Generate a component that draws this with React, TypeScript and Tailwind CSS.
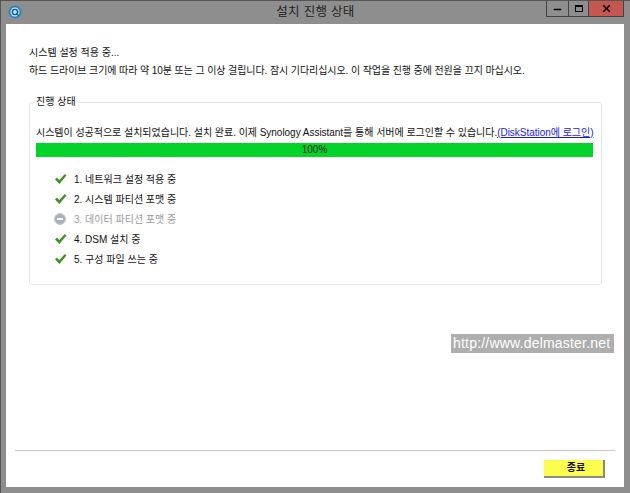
import { Minus, X } from 'lucide-react'

const kr = '"Liberation Sans", "Noto Sans CJK KR", sans-serif'

const steps = [
  { label: '1. 네트워크 설정 적용 중', done: true },
  { label: '2. 시스템 파티션 포맷 중', done: true },
  { label: '3. 데이터 파티션 포맷 중', done: false },
  { label: '4. DSM 설치 중', done: true },
  { label: '5. 구성 파일 쓰는 중', done: true },
]

function AppIcon() {
  return (
    <svg width="14" height="14" viewBox="0 0 14 14">
      <circle cx="7" cy="7" r="6.5" fill="#2f86b8" />
      <circle cx="7" cy="7" r="4.5" fill="#bfe3f2" />
      <circle cx="7" cy="7" r="2.6" fill="none" stroke="#0f5d8c" strokeWidth="1.4" />
      <path d="M8 9l2.5 1.5" stroke="#0f5d8c" strokeWidth="1.4" />
    </svg>
  )
}

function StepIcon({ done }: { done: boolean }) {
  if (done) {
    return (
      <svg width="13" height="12" viewBox="0 0 13 12">
        <path d="M1 6.5l2-2 2.3 2.4L10.8 1 12.5 2.6 5.4 11z" fill="#43922b" />
      </svg>
    )
  }
  return (
    <div className="w-[12px] h-[12px] rounded-full bg-[#a9b2bb] border border-[#c4cad0] flex items-center justify-center">
      <div className="w-[6px] h-[2px] bg-white" />
    </div>
  )
}

export default function App() {
  return (
    <div
      className="relative w-[630px] h-[493px] overflow-hidden bg-[#8e8e8e] border-t border-l border-[#555] flex flex-col"
      style={{ fontFamily: kr }}
    >
      <header className="h-[23px] flex shrink-0 relative">
        <div className="absolute left-[7px] top-[4px]">
          <AppIcon />
        </div>
        <div className="flex-1 text-center text-[12.5px] leading-[23px] text-[#222] tracking-[0.3px]">설치 진행 상태</div>
        <div className="absolute right-[6px] top-0 h-[16px] flex border-b border-l border-r border-[#444]">
          <div className="w-[22px] flex items-center justify-center border-r border-[#444]">
            <Minus size={11} strokeWidth={3} className="text-black mt-[2px]" />
          </div>
          <div className="w-[20px] flex items-center justify-center border-r border-[#444]">
            <div className="w-[8px] h-[7px] border border-t-2 border-black" />
          </div>
          <div className="w-[34px] bg-[#c4574f] flex items-center justify-center">
            <X size={11} strokeWidth={3.5} className="text-black" />
          </div>
        </div>
      </header>

      <main className="w-[618px] ml-[5px] h-[463px] bg-white flex flex-col text-[10px] text-[#111]">
        <div className="pl-[23px] pt-[20px]">
          <p className="leading-[18px] h-[18px]">시스템 설정 적용 중...</p>
          <p className="leading-[18px] h-[17px] tracking-[-0.09px]">
            하드 드라이브 크기에 따라 약 10분 또는 그 이상 걸립니다. 잠시 기다리십시오. 이 작업을 진행 중에 전원을 끄지 마십시오.
          </p>
        </div>

        <section className="relative ml-[23px] mt-[23px] w-[573px] h-[183px] border border-[#e2e6e8] rounded-[3px] px-[6px] pt-[22px]">
          <div className="absolute left-[4px] top-[-8px] bg-white px-[2px] leading-[14px]">진행 상태</div>
          <p className="h-[18px] leading-[16px] whitespace-nowrap tracking-[-0.03px]">
            시스템이 성공적으로 설치되었습니다. 설치 완료. 이제 Synology Assistant를 통해 서버에 로그인할 수 있습니다.
            <a href="#" className="text-[#1a1ae0] underline">(DiskStation에 로그인)</a>
          </p>
          <div className="h-[14px] w-[557px] bg-[#04d32a] text-center leading-[14px] text-[#222]">100%</div>
          <ul className="mt-[12px] pl-[18px] flex flex-col">
            {steps.map((s) => (
              <li key={s.label} className="h-[20px] flex items-center">
                <div className="w-[20px] flex justify-start">
                  <StepIcon done={s.done} />
                </div>
                <span className={s.done ? 'text-[#111]' : 'text-[#9a9a9a]'}>{s.label}</span>
              </li>
            ))}
          </ul>
        </section>

        <div className="mt-auto ml-[9px] mr-[9px] border-t border-[#c8c8c8] h-[37px] flex justify-end items-start pt-[9px] pr-[10px]">
          <button className="w-[61px] h-[18px] bg-[#fdfd4f] border-r-2 border-b-2 border-[#8c8c7a] text-[10px] font-bold leading-[16px] text-center pl-[5px]">
            종료
          </button>
        </div>
      </main>

      <div className="absolute left-[450px] top-[333px] w-[163px] h-[19px] bg-[#aeaeae] text-white text-[14px] leading-[19px] pl-[2px] tracking-[0.2px] whitespace-nowrap">
        http://www.delmaster.net
      </div>
    </div>
  )
}
